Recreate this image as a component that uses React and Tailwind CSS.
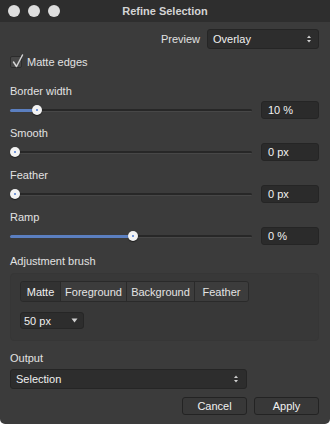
import React from 'react';

const sliders = [
  { label: 'Border width', value: 0.095, text: '10 %', fill: true },
  { label: 'Smooth', value: 0, text: '0 px', fill: false },
  { label: 'Feather', value: 0, text: '0 px', fill: false },
  { label: 'Ramp', value: 0.51, text: '0 %', fill: true },
];

const segments = [
  { name: 'Matte', w: 'w-[39px]', active: true },
  { name: 'Foreground', w: 'w-[66px]' },
  { name: 'Background', w: 'w-[68px]' },
  { name: 'Feather', w: 'w-[54px]' },
];

function UpDown() {
  return (
    <svg width="6" height="10" viewBox="0 0 6 10" className="text-[#d0d0d0]">
      <path d="M1 4 L3 1.5 L5 4 Z" fill="currentColor" />
      <path d="M1 6 L3 8.5 L5 6 Z" fill="currentColor" />
    </svg>
  );
}

function Slider({ value, fill }) {
  const pos = `calc(5px + (100% - 10px) * ${value})`;
  return (
    <div className="relative flex-1 h-[18px] flex items-center">
      <div className="w-full h-[3px] rounded-full bg-[#272727] border-b border-[#474747]" />
      {fill && value > 0 && (
        <div className="absolute left-0 h-[3px] rounded-full bg-[#5b7fc0]" style={{ width: pos }} />
      )}
      <div
        className="absolute w-[10px] h-[10px] -ml-[5px] rounded-full bg-[#f2f2f2] shadow-[0_1px_1px_rgba(0,0,0,0.5)] flex items-center justify-center"
        style={{ left: pos }}
      >
        <div className="w-[2px] h-[2px] rounded-full bg-[#4a78d0]" />
      </div>
    </div>
  );
}

export default function App() {
  return (
    <div className="w-[330px] h-[424px] bg-white font-['Liberation_Sans',Arial,sans-serif] text-[11px] leading-[14px] text-[#e2e2e2]">
      <div className="w-full h-full bg-[#3b3b3b] rounded-b-[5px] overflow-hidden flex flex-col">
        {/* title bar */}
        <div className="h-[22px] bg-[#2e2e2e] flex items-center">
          <div className="w-[60px] flex items-center gap-[8px] pl-[8px]">
            <div className="w-[12px] h-[12px] rounded-full bg-[#dedede]" />
            <div className="w-[12px] h-[12px] rounded-full bg-[#dedede]" />
            <div className="w-[12px] h-[12px] rounded-full bg-[#dedede]" />
          </div>
          <div className="flex-1 text-center font-bold text-[#d4d4d4]">Refine Selection</div>
          <div className="w-[60px]" />
        </div>

        <div className="flex flex-col pl-[10px] pr-[11px]">
          {/* preview */}
          <div className="mt-[7px] flex items-center justify-end gap-[7px]">
            <span>Preview</span>
            <div className="w-[112px] h-[20px] rounded-[3px] bg-[#2d2d2d] border border-[#252525] flex items-center justify-between pl-[5px] pr-[6px] text-[#f0f0f0]">
              <span>Overlay</span>
              <UpDown />
            </div>
          </div>

          {/* matte edges */}
          <div className="mt-[6px] h-[14px] flex items-center gap-[5px]">
            <div className="relative w-[12px] h-[12px] rounded-[2px] bg-[#474747] border border-[#2c2c2c]">
              <svg width="14" height="16" viewBox="0 0 14 16" className="absolute left-[0px] top-[-4px] overflow-visible">
                <path d="M2.5 9 L5.5 13.5 L11.5 2" fill="none" stroke="#d2d2d2" strokeWidth="1.5" strokeLinecap="round" strokeLinejoin="round" />
              </svg>
            </div>
            <span>Matte edges</span>
          </div>

          {/* sliders */}
          {sliders.map((s, i) => (
            <div key={s.label} className={i === 0 ? 'mt-[15px]' : 'mt-[7px]'}>
              <div className="h-[14px]">{s.label}</div>
              <div className="mt-[3px] flex items-center gap-[9px]">
                <Slider value={s.value} fill={s.fill} />
                <div className="w-[58px] h-[18px] rounded-[3px] bg-[#2b2b2b] border border-[#252525] px-[6px] flex items-center text-[#f2f2f2]">
                  {s.text}
                </div>
              </div>
            </div>
          ))}

          {/* adjustment brush */}
          <div className="mt-[9px] h-[14px]">Adjustment brush</div>
          <div className="mt-[5px] rounded-[4px] bg-[#383838] border border-[#363636] pt-[7px] pb-[11px] pl-[9px]">
            <div className="flex w-fit h-[21px] rounded-[3px] border border-[#2a2a2a] overflow-hidden">
              {segments.map((seg, i) => (
                <div
                  key={seg.name}
                  className={`${seg.w} flex items-center justify-center ${i > 0 ? 'border-l border-[#2a2a2a]' : ''} ${seg.active ? 'bg-[#323232] text-[#f0f0f0]' : 'bg-[#3c3c3c] text-[#e4e4e4]'}`}
                >
                  {seg.name}
                </div>
              ))}
            </div>
            <div className="mt-[10px] w-[64px] h-[17px] rounded-[3px] bg-[#2d2d2d] border border-[#262626] flex items-center justify-between pl-[3px] pr-[5px] text-[#f0f0f0]">
              <span>50 px</span>
              <svg width="7" height="5" viewBox="0 0 7 5">
                <path d="M0.5 0.5 L6.5 0.5 L3.5 4.5 Z" fill="#d0d0d0" />
              </svg>
            </div>
          </div>

          {/* output */}
          <div className="mt-[10px] h-[14px]">Output</div>
          <div className="mt-[4px] w-[237px] h-[20px] rounded-[3px] bg-[#2d2d2d] border border-[#252525] flex items-center justify-between pl-[5px] pr-[7px] text-[#f0f0f0]">
            <span>Selection</span>
            <UpDown />
          </div>

          {/* buttons */}
          <div className="mt-[8px] flex justify-end gap-[7px]">
            <div className="w-[65px] h-[18px] rounded-[3px] bg-[#383838] border border-[#232323] flex items-center justify-center text-[#f0f0f0]">
              Cancel
            </div>
            <div className="w-[65px] h-[18px] rounded-[3px] bg-[#383838] border border-[#232323] flex items-center justify-center text-[#f0f0f0]">
              Apply
            </div>
          </div>
        </div>
      </div>
    </div>
  );
}
